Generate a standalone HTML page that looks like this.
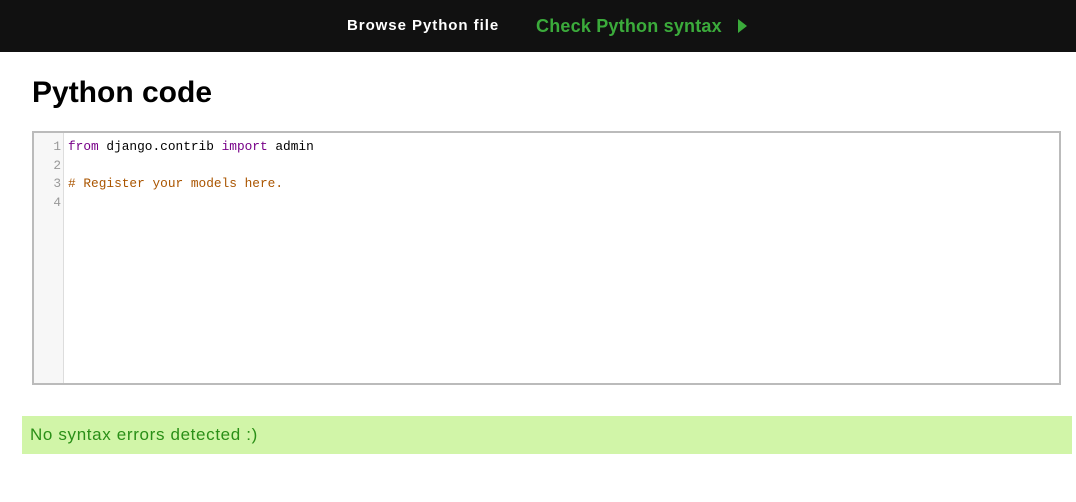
<!DOCTYPE html>
<html><head><style>
body{margin:0;width:1076px;height:502px;background:#fff;font-family:"Liberation Sans",sans-serif;position:relative;overflow:hidden}
.nav{position:absolute;left:0;top:0;width:1076px;height:52px;background:#111}
.b{position:absolute;left:347px;top:17px;color:#fff;font-weight:bold;font-size:15px;letter-spacing:0.95px}
.c{position:absolute;left:536px;top:16px;color:#3bab3b;font-weight:bold;font-size:18px;letter-spacing:0.2px}
.tri{position:absolute;left:738px;top:19px;width:0;height:0;border-left:9px solid #3bab3b;border-top:7px solid transparent;border-bottom:7px solid transparent}
h1{position:absolute;left:32px;top:76px;margin:0;font-size:30px;font-weight:bold;color:#000}
.ed{position:absolute;left:32px;top:131px;width:1025px;height:250px;border:2px solid #bbb;background:#fff}
.g{position:absolute;left:0;top:0;width:29px;height:250px;background:#f7f7f7;border-right:1px solid #ddd}
.code{position:absolute;top:5px;font-family:"Liberation Mono",monospace;font-size:12.8px;line-height:18.6px;white-space:pre}
.ln{left:0;width:27px;text-align:right;color:#999}
.tx{left:34px;color:#000}
.k{color:#708}.cm{color:#a50}
.ok{position:absolute;left:22px;top:416px;width:1050px;height:38px;background:#d1f5a8;color:#2a8f17;font-size:17px;letter-spacing:0.65px;line-height:38px;padding-left:8px;box-sizing:border-box}
</style></head><body>
<div class="nav"><div class="b">Browse Python file</div><div class="c">Check Python syntax</div><div class="tri"></div></div>
<h1>Python code</h1>
<div class="ed"><div class="g"></div>
<div class="code ln">1
2
3
4</div>
<div class="code tx"><span class="k">from</span> django.contrib <span class="k">import</span> admin

<span class="cm"># Register your models here.</span>
</div></div>
<div class="ok">No syntax errors detected :)</div>
</body></html>
